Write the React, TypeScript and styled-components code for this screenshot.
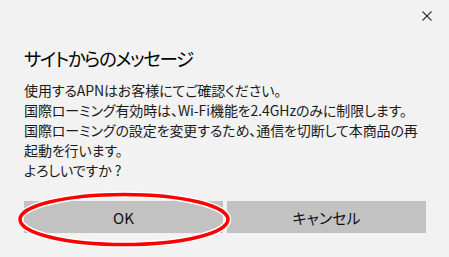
import React from "react";
import styled, { createGlobalStyle } from "styled-components";

const GlobalStyle = createGlobalStyle`
  html, body {
    margin: 0;
    padding: 0;
    background: #f2f2f2;
  }
  * {
    box-sizing: border-box;
  }
`;

const Dialog = styled.div`
  width: 449px;
  height: 257px;
  background: #f2f2f2;
  font-family: "Noto Sans CJK JP", "Noto Sans", sans-serif;
  font-feature-settings: "palt";
  color: #1b1b1b;
  display: flex;
  flex-direction: column;
  overflow: hidden;
`;

const TopBar = styled.div`
  display: flex;
  justify-content: flex-end;
  padding: 6px 7px 0 0;
  height: 32px;
`;

const CloseButton = styled.button`
  width: 30px;
  height: 20px;
  border: none;
  background: transparent;
  padding: 0;
  display: flex;
  align-items: center;
  justify-content: center;
  cursor: pointer;
`;

const Title = styled.h1`
  margin: 12px 0 0 24px;
  font-size: 18.5px;
  font-weight: 400;
  letter-spacing: -1.4px;
  line-height: 28px;
  color: #000;
`;

const Body = styled.p`
  margin: 8px 0 0 24px;
  font-size: 14px;
  letter-spacing: -0.1px;
  line-height: 20px;
  white-space: pre;
`;

const Actions = styled.div`
  display: grid;
  grid-template-columns: 199px 199px;
  gap: 4px;
  margin: 21px 0 0 24px;
`;

const ButtonSlot = styled.div`
  position: relative;
`;

const ActionButton = styled.button`
  width: 100%;
  height: 32px;
  border: none;
  background: #c2c2c2;
  font-family: inherit;
  font-feature-settings: "palt";
  font-size: 15px;
  font-weight: 400;
  color: #111;
  padding: 0;
`;

const Highlight = styled.svg`
  position: absolute;
  left: -7px;
  top: -9px;
  width: 214px;
  height: 55px;
  pointer-events: none;
  overflow: visible;
`;

const message = [
  "使用するAPNはお客様にてご確認ください。",
  "国際ローミング有効時は、Wi-Fi機能を2.4GHzのみに制限します。",
  "国際ローミングの設定を変更するため、通信を切断して本商品の再",
  "起動を行います。",
  "よろしいですか ?",
].join("\n");

export default function App() {
  return (
    <>
      <GlobalStyle />
      <Dialog>
        <TopBar>
          <CloseButton aria-label="閉じる">
            <svg width="10" height="10" viewBox="0 0 10 10">
              <path d="M0.5 0.5 L9.5 9.5 M9.5 0.5 L0.5 9.5" stroke="#333" strokeWidth="1.1" fill="none" />
            </svg>
          </CloseButton>
        </TopBar>
        <Title>サイトからのメッセージ</Title>
        <Body>{message}</Body>
        <Actions>
          <ButtonSlot>
            <ActionButton>OK</ActionButton>
            <Highlight viewBox="0 0 214 55">
              <ellipse cx="107" cy="27.5" rx="104" ry="25" fill="none" stroke="#fff" strokeWidth="6.5" />
              <ellipse cx="107" cy="27.5" rx="104" ry="25" fill="none" stroke="#f00" strokeWidth="3.5" />
            </Highlight>
          </ButtonSlot>
          <ActionButton>キャンセル</ActionButton>
        </Actions>
      </Dialog>
    </>
  );
}
